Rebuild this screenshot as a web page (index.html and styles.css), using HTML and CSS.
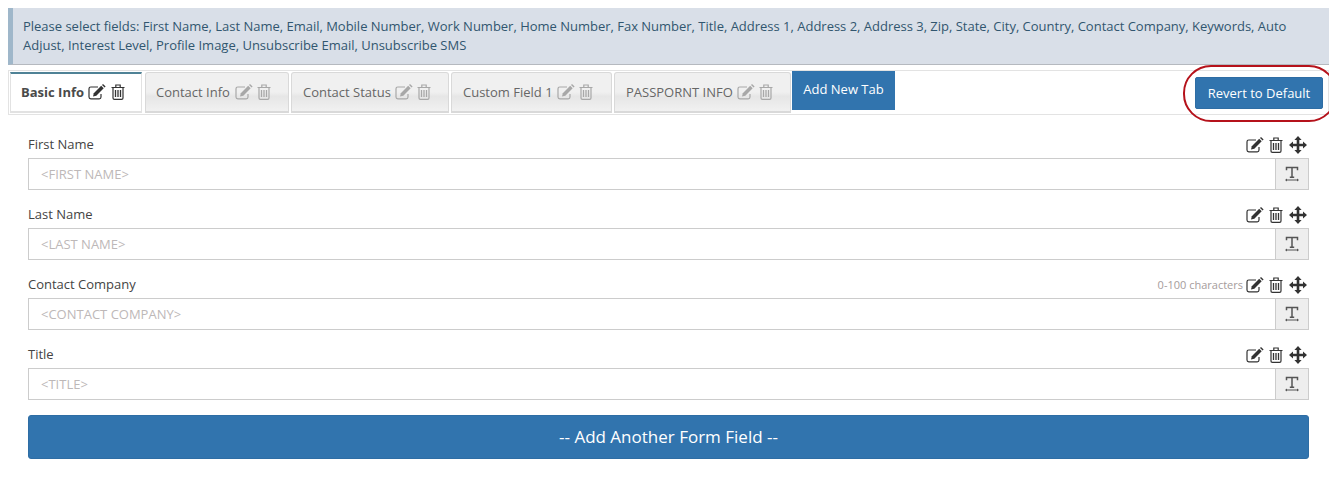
FILE: index.html
```html
<!DOCTYPE html>
<html lang="en">
<head>
  <meta charset="UTF-8">
  <title>Form Fields</title>
  <link rel="stylesheet" href="styles.css">
</head>
<body>
  <svg class="sprites" width="0" height="0">
    <symbol id="i-edit" viewBox="0 0 18 16">
      <path d="M13 10v3a1.800 1.800 0 0 1-1.800 1.800H2.800A1.800 1.800 0 0 1 1 13V4.800A1.800 1.800 0 0 1 2.800 3H10" fill="none" stroke="currentColor" stroke-width="1.200"/>
      <path d="M5 12.500l.8-3.300 7.400-7.400 2.500 2.500-7.400 7.400z" fill="currentColor"/>
      <path d="M14 1l1-1 2.600 2.600-1 1z" fill="currentColor"/>
    </symbol>
    <symbol id="i-trash" viewBox="0 0 14 16">
      <path d="M.5 3.500h13M4.800 3.300V1h4.400v2.300M2 3.500v10.500q0 1.400 1.400 1.400h7.200q1.400 0 1.400-1.400V3.500" fill="none" stroke="currentColor" stroke-width="1.200"/>
      <path d="M4.500 6v7M7 6v7M9.500 6v7" fill="none" stroke="currentColor" stroke-width="1.300"/>
    </symbol>
    <symbol id="i-move" viewBox="0 0 18 18">
      <path d="M9 0l3.600 4H10.300v3.700H14V5.400L18 9l-4 3.600v-2.300h-3.700V14h2.300L9 18l-3.600-4h2.300v-3.700H4v2.300L0 9l4-3.600v2.300h3.700V4H5.400z" fill="currentColor"/>
    </symbol>
    <symbol id="i-text" viewBox="0 0 14 16">
      <path d="M1.500 4.200V1.500h11v2.700M7 1.500v9.800M4.800 11.300h4.400" fill="none" stroke="currentColor" stroke-width="1.500"/>
      <path d="M1 14h12" fill="none" stroke="currentColor" stroke-width="1"/>
      <path d="M0 14l2-1.600v3.200zM14 14l-2-1.600v3.200z" fill="currentColor"/>
    </symbol>
  </svg>

  <div class="notice">Please select fields: First Name, Last Name, Email, Mobile Number, Work Number, Home Number, Fax Number, Title, Address 1, Address 2, Address 3, Zip, State, City, Country, Contact Company, Keywords, Auto Adjust, Interest Level, Profile Image, Unsubscribe Email, Unsubscribe SMS</div>

  <div class="tabbar">
    <div class="tab tab-active">
      <span>Basic Info</span>
      <svg class="ico-edit"><use href="#i-edit"/></svg>
      <svg class="ico-trash"><use href="#i-trash"/></svg>
    </div>
    <div class="tab tab-contact">
      <span>Contact Info</span>
      <svg class="ico-edit"><use href="#i-edit"/></svg>
      <svg class="ico-trash"><use href="#i-trash"/></svg>
    </div>
    <div class="tab tab-status">
      <span>Contact Status</span>
      <svg class="ico-edit"><use href="#i-edit"/></svg>
      <svg class="ico-trash"><use href="#i-trash"/></svg>
    </div>
    <div class="tab tab-custom">
      <span>Custom Field 1</span>
      <svg class="ico-edit"><use href="#i-edit"/></svg>
      <svg class="ico-trash"><use href="#i-trash"/></svg>
    </div>
    <div class="tab tab-passport">
      <span>PASSPORNT INFO</span>
      <svg class="ico-edit"><use href="#i-edit"/></svg>
      <svg class="ico-trash"><use href="#i-trash"/></svg>
    </div>
    <button class="add-tab">Add New Tab</button>
    <div class="revert-wrap">
      <button class="revert">Revert to Default</button>
      <div class="revert-ring"></div>
    </div>
  </div>

  <div class="fields">
    <div class="field">
      <div class="field-head">
        <label>First Name</label>
        <div class="tools">
          <svg class="ico-edit"><use href="#i-edit"/></svg>
          <svg class="ico-trash"><use href="#i-trash"/></svg>
          <svg class="ico-move"><use href="#i-move"/></svg>
        </div>
      </div>
      <div class="input-row">
        <div class="input">&lt;FIRST NAME&gt;</div>
        <div class="addon"><svg class="ico-text"><use href="#i-text"/></svg></div>
      </div>
    </div>

    <div class="field">
      <div class="field-head">
        <label>Last Name</label>
        <div class="tools">
          <svg class="ico-edit"><use href="#i-edit"/></svg>
          <svg class="ico-trash"><use href="#i-trash"/></svg>
          <svg class="ico-move"><use href="#i-move"/></svg>
        </div>
      </div>
      <div class="input-row">
        <div class="input">&lt;LAST NAME&gt;</div>
        <div class="addon"><svg class="ico-text"><use href="#i-text"/></svg></div>
      </div>
    </div>

    <div class="field">
      <div class="field-head">
        <label>Contact Company</label>
        <div class="tools">
          <span class="hint">0-100 characters</span>
          <svg class="ico-edit"><use href="#i-edit"/></svg>
          <svg class="ico-trash"><use href="#i-trash"/></svg>
          <svg class="ico-move"><use href="#i-move"/></svg>
        </div>
      </div>
      <div class="input-row">
        <div class="input">&lt;CONTACT COMPANY&gt;</div>
        <div class="addon"><svg class="ico-text"><use href="#i-text"/></svg></div>
      </div>
    </div>

    <div class="field">
      <div class="field-head">
        <label>Title</label>
        <div class="tools">
          <svg class="ico-edit"><use href="#i-edit"/></svg>
          <svg class="ico-trash"><use href="#i-trash"/></svg>
          <svg class="ico-move"><use href="#i-move"/></svg>
        </div>
      </div>
      <div class="input-row">
        <div class="input">&lt;TITLE&gt;</div>
        <div class="addon"><svg class="ico-text"><use href="#i-text"/></svg></div>
      </div>
    </div>

    <button class="add-field">-- Add Another Form Field --</button>
  </div>
</body>
</html>
```

FILE: styles.css
```css
* {
  box-sizing: border-box;
}

body {
  margin: 8px 11px 0 8px;
  font-family: "Open Sans", sans-serif;
  font-size: 13px;
  color: #333;
  background: #fff;
}

.sprites {
  display: block;
  height: 0;
}

button {
  font-family: inherit;
  border: none;
  color: #fff;
  background: #3174ae;
}

.notice {
  height: 57px;
  padding: 9px 10px 0 10px;
  border-left: 5px solid #9fb7ca;
  border-bottom: 1px solid #b5b9bf;
  background: #d9dfe8;
  color: #31566f;
  line-height: 19px;
  letter-spacing: -0.01px;
}

.tabbar {
  display: flex;
  height: 45px;
  margin-top: 5px;
  padding: 1px 1px 0 1px;
  border: 1px solid #e3e3e3;
  align-items: flex-start;
}

.tab {
  display: flex;
  align-items: center;
  height: 41px;
  margin-right: 2px;
  padding: 0 0 0 11px;
  border: 1px solid #d9d9d9;
  border-bottom-width: 2px;
  border-radius: 3px 3px 0 0;
  background: linear-gradient(#f0f0f0 0, #f0f0f0 50%, #e6e6e6 62%, #f1f1f1 100%);
  color: #666;
}

.tab svg {
  color: #a8a8a8;
}

.tab span {
  margin-right: 4px;
}

.tab .ico-edit {
  margin-right: 4px;
}

.tab-active {
  width: 132px;
  margin-right: 3px;
  padding-left: 10px;
  padding-bottom: 1px;
  border-color: #e2e2e2;
  border-top: 2px solid #4f8296;
  border-radius: 0;
  background: #fff;
  color: #4a4a4a;
  font-weight: 700;
}

.tab-active svg {
  color: #333;
}

.tab-active .ico-edit {
  margin-right: 5px;
}

.tab-contact {
  width: 144px;
  padding-left: 10px;
}

.tab-contact span {
  margin-right: 5px;
}

.tab-status {
  width: 158px;
}

.tab-custom {
  width: 161px;
}

.tab-passport {
  width: 177px;
  margin-right: 1px;
}

.add-tab {
  width: 103px;
  height: 39px;
  margin-top: -1px;
  padding: 0 0 3px 0;
  font-size: 13px;
}

.revert-wrap {
  position: relative;
  margin: 5px 4px 0 auto;
}

.revert {
  display: block;
  width: 128px;
  height: 32px;
  border: 1px solid #2e6da4;
  border-radius: 2px;
  font-size: 13px;
}

.revert-ring {
  position: absolute;
  top: -12px;
  left: -12px;
  width: 154px;
  height: 57px;
  border: 2px solid #b5121b;
  border-radius: 28px;
}

.fields {
  padding: 20px 20px 0 20px;
}

.field {
  height: 70px;
}

.field-head {
  display: flex;
  justify-content: space-between;
  align-items: center;
  height: 23px;
  padding-bottom: 6px;
}

label {
  color: #444;
}

.tools {
  display: flex;
  align-items: center;
  margin-right: 2px;
  padding-top: 2px;
  color: #333;
}

.hint {
  margin-right: 3px;
  font-size: 11px;
  color: #a59c9c;
}

.ico-edit {
  width: 18px;
  height: 16px;
}

.ico-trash {
  width: 14px;
  height: 16px;
}

.ico-move {
  width: 18px;
  height: 18px;
}

.tools .ico-edit {
  margin-right: 5px;
}

.tools .ico-trash {
  margin-right: 6px;
}

.input-row {
  display: flex;
  height: 32px;
}

.input {
  flex: 1;
  padding: 0 12px;
  border: 1px solid #ccc;
  border-right: none;
  line-height: 30px;
  color: #bdb8b8;
}

.addon {
  display: flex;
  justify-content: center;
  align-items: center;
  width: 34px;
  border: 1px solid #ccc;
  background: #eee;
  color: #555;
}

.ico-text {
  width: 14px;
  height: 16px;
}

.add-field {
  display: block;
  width: 100%;
  height: 44px;
  padding: 0 0 2px 0;
  border: 1px solid #2e6da4;
  border-radius: 3px;
  font-size: 17px;
}
```
